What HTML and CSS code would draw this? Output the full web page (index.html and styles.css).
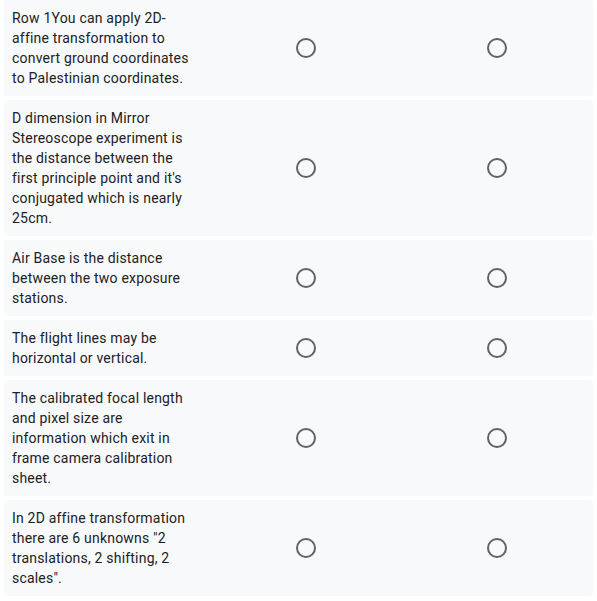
FILE: index.html
```html
<!DOCTYPE html>
<html>
<head>
<meta charset="utf-8">
<link rel="stylesheet" href="styles.css">
</head>
<body>
<div class="grid">
  <div class="row"><div class="label">Row 1You can apply 2D-affine transformation to convert ground coordinates to Palestinian coordinates.</div><div class="cell"><span class="radio"></span></div><div class="cell"><span class="radio"></span></div></div>
  <div class="row"><div class="label">D dimension in Mirror Stereoscope experiment is the distance between the first principle point and it's conjugated which is nearly 25cm.</div><div class="cell"><span class="radio"></span></div><div class="cell"><span class="radio"></span></div></div>
  <div class="row"><div class="label">Air Base is the distance between the two exposure stations.</div><div class="cell"><span class="radio"></span></div><div class="cell"><span class="radio"></span></div></div>
  <div class="row"><div class="label">The flight lines may be horizontal or vertical.</div><div class="cell"><span class="radio"></span></div><div class="cell"><span class="radio"></span></div></div>
  <div class="row"><div class="label">The calibrated focal length and pixel size are information which exit in frame camera calibration sheet.</div><div class="cell"><span class="radio"></span></div><div class="cell"><span class="radio"></span></div></div>
  <div class="row"><div class="label">In 2D affine transformation there are 6 unknowns "2 translations, 2 shifting, 2 scales".</div><div class="cell"><span class="radio"></span></div><div class="cell"><span class="radio"></span></div></div>
</div>
</body>
</html>
```
FILE: styles.css
```css
html, body {
  margin: 0;
  padding: 0;
  background: #ffffff;
}
body {
  font-family: Roboto, "Liberation Sans", sans-serif;
  font-size: 14px;
  line-height: 20px;
  letter-spacing: 0.2px;
  color: #202124;
}
.grid {
  display: flex;
  flex-direction: column;
  gap: 4px;
  padding: 0 4px;
}
.row {
  display: grid;
  grid-template-columns: 206px 1fr 1fr;
  background: #f8f9fa;
  border-radius: 3px;
}
.label {
  padding: 8px 16px 8px 8px;
}
.cell {
  display: flex;
  align-items: center;
  justify-content: center;
}
.radio {
  width: 16px;
  height: 16px;
  border: 2px solid #5f6368;
  border-radius: 50%;
  box-sizing: content-box;
}
```
